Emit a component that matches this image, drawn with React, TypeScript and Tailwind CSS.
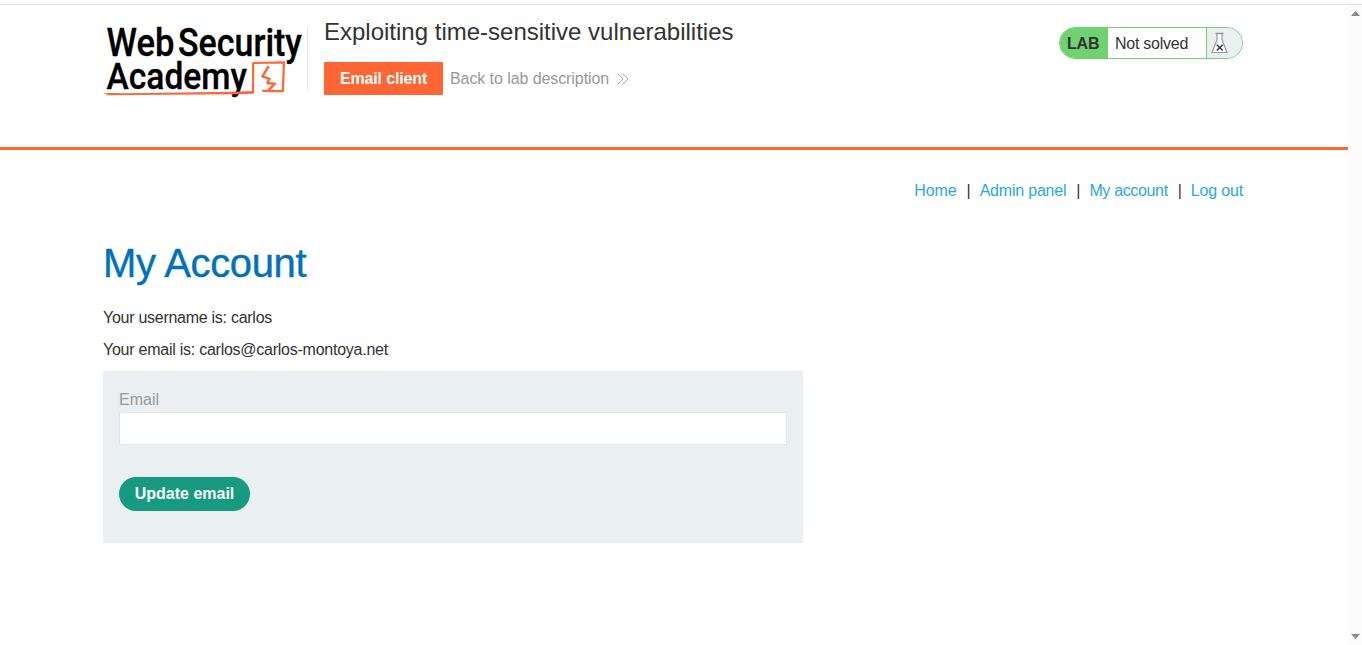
import type { ReactNode } from 'react';

function Logo() {
  return (
    <svg className="h-[74px] w-[204px] shrink-0 overflow-visible" viewBox="103 25 204 74" fill="none" role="img" aria-label="Web Security Academy">
      <g fill="#000" stroke="#000" strokeWidth="0.3" fontFamily="Roboto, sans-serif" fontWeight={500}>
        <text x="106.5" y="55.9" fontSize="38" textLength="68" lengthAdjust="spacingAndGlyphs">Web</text>
        <text x="178" y="55.9" fontSize="38" textLength="124" lengthAdjust="spacingAndGlyphs">Security</text>
        <text x="106.5" y="88.5" fontSize="37.5" textLength="140.5" lengthAdjust="spacingAndGlyphs">Academy</text>
      </g>
      <g stroke="#ff6633" strokeLinecap="round" strokeLinejoin="round">
        <path d="M240 92.8 L253 92.2 L253.2 63 L284 62.4 L282.8 91.2 L263 90.8" strokeWidth="2.2" />
        <path d="M268.2 67 L262.4 76.3 L269.4 78.8 L267.4 83.2 L275 83.6 L268 90.6" strokeWidth="2.4" />
      </g>
      <path d="M103 93 L112 93.1 L125 93.3 L254 91.4 L254 93.4 L240 94.2 L165 94.8 L106 95.3 L108 94.5 Z" fill="#ff6633" />
    </svg>
  );
}

function Flask() {
  return (
    <svg className="h-[22px] w-[18px]" viewBox="0 0 18 22" fill="none">
      <path d="M6 1.5 V8 L1 20.5 H16 L11 8 V1.5" fill="#fff" stroke="#999" strokeWidth="1.2" />
      <path d="M4.5 1.4 H12.5" stroke="#999" strokeWidth="1.5" />
      <path d="M5.7 12.7 L11.7 18.5 M11.7 12.7 L5.7 18.5" stroke="#333" strokeWidth="1.4" />
    </svg>
  );
}

function NavLink({ children, className }: { children: ReactNode; className: string }) {
  return <a href="#" className={`whitespace-nowrap text-[#29a9e0] ${className}`}>{children}</a>;
}

function Separator() {
  return <span className="w-[23px] pl-px text-center">|</span>;
}

export default function App() {
  return (
    <div className="flex h-[645px] w-full flex-col overflow-hidden bg-white pt-1 font-['Liberation_Sans',Arial,sans-serif] text-base leading-5 text-[#333332]">
      <div className="h-px shrink-0 bg-[#e0e0e0]" />
      <div className="flex min-h-0 flex-1">
        <div className="min-w-0 flex-1">
          <header className="flex h-[145px] items-start border-b-[3px] border-[#ff6633] pl-[103px] pr-[105px]">
            <div className="mt-[20px] flex">
              <Logo />
              <div className="mt-[2px] h-[63px] w-px bg-[#e2e4e6]" />
            </div>
            <div className="ml-4 pt-[13px]">
              <h2 className="whitespace-nowrap text-2xl leading-7">Exploiting time-sensitive vulnerabilities</h2>
              <div className="mt-4 flex items-center">
                <button className="h-[33px] w-[119px] bg-[#ff6633] font-bold tracking-[-0.15px] text-white">Email client</button>
                <a href="#" className="ml-[7px] flex items-center whitespace-nowrap tracking-[-0.08px] text-[#999]">
                  Back to lab description
                  <svg className="ml-2 h-[12px] w-[12px]" viewBox="0 0 12 12" fill="none" stroke="#aaa">
                    <path d="M.5 .5 L6 6 L.5 11.5 M5.5 .5 L11 6 L5.5 11.5" />
                  </svg>
                </a>
              </div>
            </div>
            <div className="ml-auto mt-[22px] flex h-8 w-[184px] overflow-hidden rounded-full border border-[#6fd16f] bg-white">
              <div className="flex w-12 items-center bg-[#6fd16f] pl-[7px] pt-px font-bold tracking-[-0.2px]">LAB</div>
              <div className="flex flex-1 items-center whitespace-nowrap pl-[7px] pt-px tracking-[-0.25px]">Not solved</div>
              <div className="flex w-9 shrink-0 items-center border-l border-[#6fd16f] bg-[#eaeff2] pl-1">
                <Flask />
              </div>
            </div>
          </header>
          <nav className="mr-[105px] mt-[31px] flex h-5 items-center justify-end">
            <NavLink className="tracking-[-0.1px]">Home</NavLink>
            <Separator />
            <NavLink className="tracking-[-0.2px]">Admin panel</NavLink>
            <Separator />
            <NavLink className="tracking-[-0.34px]">My account</NavLink>
            <Separator />
            <NavLink className="tracking-[-0.17px]">Log out</NavLink>
          </nav>
          <main className="ml-[103px] w-[700px]">
            <h1 className="mt-[38px] h-[49px] text-[40px] leading-[48px] tracking-[-0.35px] text-[#0071bc] [-webkit-text-stroke:0.4px_#0071bc]">My Account</h1>
            <p className="mt-5 h-5 tracking-[-0.27px]">Your username is: carlos</p>
            <p className="mt-3 h-5 tracking-[-0.25px]">Your email is: carlos@carlos-montoya.net</p>
            <form className="mt-[11px] h-[172px] bg-[#eaeff2] px-4 pt-[19px]">
              <label className="block h-5 text-[#999]" htmlFor="email">Email</label>
              <input id="email" className="mt-[2px] block h-[33px] w-full border border-[#e2e4e6] bg-white px-2 outline-none" />
              <button type="button" className="mt-8 block h-[34px] w-[131px] rounded-full bg-[#169b80] font-bold text-white">Update email</button>
            </form>
          </main>
        </div>
        <div className="flex w-[14px] shrink-0 flex-col items-center justify-between bg-[#fcfcfc] pb-[5px] pl-px pt-[6px]">
          <svg className="h-[6px] w-[9px]" viewBox="0 0 9 6"><path d="M0 5 L4.5 0 L9 5 Z" fill="#8b8b8b" /></svg>
          <svg className="h-[6px] w-[9px]" viewBox="0 0 9 6"><path d="M0 0 L4.5 5 L9 0 Z" fill="#8b8b8b" /></svg>
        </div>
      </div>
    </div>
  );
}
